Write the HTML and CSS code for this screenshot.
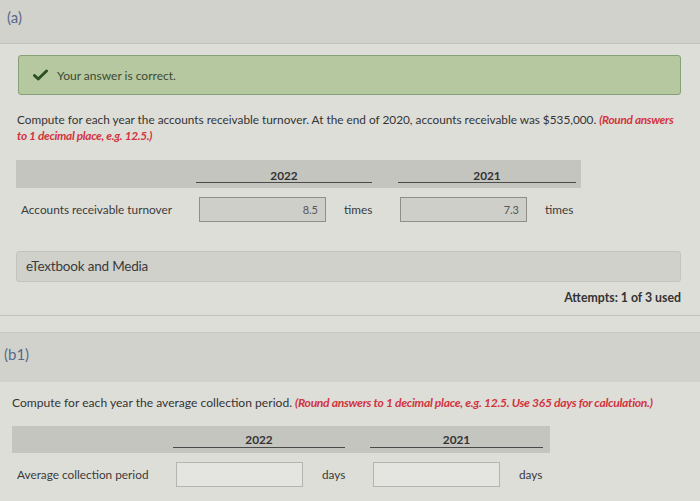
FILE: index.html
```html
<!DOCTYPE html>
<html>
<head>
<meta charset="utf-8">
<link rel="stylesheet" href="styles.css">
</head>
<body>
<div class="sec-head sec-a">(a)</div>
<div class="part part-a">
  <div class="correct">
    <svg class="check" width="15" height="12" viewBox="0 0 15 12"><path d="M1.5 6.5 L5.2 10 L13.5 2" fill="none" stroke="#2f4f26" stroke-width="3" stroke-linecap="round" stroke-linejoin="round"/></svg>
    <span>Your answer is correct.</span>
  </div>
  <p class="instr">Compute for each year the accounts receivable turnover. At the end of 2020, accounts receivable was $535,000. <em>(Round answers<br>to 1 decimal place, e.g. 12.5.)</em></p>
  <div class="tbl tbl-a">
    <div class="thead">
      <div class="th-label"></div>
      <div class="th">2022</div>
      <div class="th">2021</div>
    </div>
    <div class="trow">
      <div class="td-label">Accounts receivable turnover</div>
      <div class="td"><div class="inp filled">8.5</div><span class="unit">times</span></div>
      <div class="td"><div class="inp filled">7.3</div><span class="unit">times</span></div>
    </div>
  </div>
  <div class="media">eTextbook and Media</div>
  <div class="attempts">Attempts: 1 of 3 used</div>
</div>
<div class="sep"></div>
<div class="sec-head sec-b">(b1)</div>
<div class="part part-b">
  <p class="instr">Compute for each year the average collection period. <em>(Round answers to 1 decimal place, e.g. 12.5. Use 365 days for calculation.)</em></p>
  <div class="tbl tbl-b">
    <div class="thead">
      <div class="th-label"></div>
      <div class="th">2022</div>
      <div class="th">2021</div>
    </div>
    <div class="trow">
      <div class="td-label">Average collection period</div>
      <div class="td"><div class="inp empty"></div><span class="unit">days</span></div>
      <div class="td"><div class="inp empty"></div><span class="unit">days</span></div>
    </div>
  </div>
</div>
</body>
</html>
```
FILE: styles.css
```css
html, body {
  margin: 0;
  padding: 0;
}
body {
  width: 700px;
  height: 501px;
  overflow: hidden;
  background: #dedeD9;
  font-family: Lato, "Open Sans", sans-serif;
  color: #3a3a3a;
}
.sec-head {
  background: #d2d2cd;
  color: #56698a;
  font-size: 15px;
  box-sizing: border-box;
}
.sec-a {
  height: 44px;
  padding: 8px 0 0 7px;
  border-bottom: 1px solid #c3c3be;
}
.part-a {
  padding: 11px 19px 0 17px;
}
.correct {
  height: 40px;
  box-sizing: border-box;
  margin-left: 1px;
  background: #b6c8a0;
  border: 1px solid #86a077;
  border-radius: 3px;
  display: flex;
  align-items: center;
  padding-left: 14px;
  font-size: 12px;
  color: #3c4a34;
}
.check {
  margin-right: 9px;
}
.instr {
  margin: 17px 0 0 0;
  font-size: 11.8px;
  line-height: 15.5px;
  color: #333;
}
.instr em {
  color: #d2343e;
  font-weight: bold;
  font-style: italic;
  letter-spacing: -0.3px;
}
.tbl-a {
  margin-top: 17px;
}
.thead {
  display: flex;
  background: #c5c5c0;
}
.tbl-a .thead {
  width: 565px;
  height: 28px;
  margin-left: -1px;
}
.th {
  box-sizing: border-box;
  text-align: center;
  font-size: 11.8px;
  font-weight: bold;
  color: #333;
  border-bottom: 1px solid #4a4a4a;
  padding-top: 8px;
}
.tbl-a .th-label { width: 180px; }
.tbl-a .th { width: 176px; height: 23px; }
.tbl-a .th + .th { margin-left: 26px; width: 178px; }
.trow {
  display: flex;
  align-items: center;
}
.tbl-a .trow {
  height: 26px;
  margin-top: 8px;
}
.td-label {
  font-size: 11.8px;
  color: #3a3a3a;
}
.tbl-a .td-label { width: 183px; padding-left: 5px; box-sizing: border-box; margin-left: -1px; }
.td {
  display: flex;
  align-items: center;
}
.tbl-a .td { width: 201px; }
.tbl-a .td + .td { width: 200px; }
.inp {
  box-sizing: border-box;
  height: 25px;
  font-size: 11px;
  text-align: right;
  line-height: 23px;
  padding-right: 7px;
  border: 1px solid #8e8e8a;
}
.tbl-a .inp { width: 127px; }
.inp.filled {
  background: #cfcfca;
  color: #555;
}
.inp.empty {
  background: #e4e4e0;
  border-color: #b4b4b0;
}
.unit {
  font-size: 11.8px;
  margin-left: 18px;
}
.media {
  margin-top: 29px;
  margin-left: -1px;
  height: 31px;
  box-sizing: border-box;
  background: #d1d1cc;
  border: 1px solid #c4c4bf;
  border-radius: 3px;
  padding: 6px 0 0 9px;
  font-size: 13.5px;
  color: #3a3a3a;
  letter-spacing: -0.2px;
}
.attempts {
  text-align: right;
  font-size: 12.3px;
  font-weight: bold;
  color: #333;
  margin-top: 8px;
}
.sep {
  margin-top: 10px;
  border-top: 1px solid #c3c3be;
  height: 16px;
}
.sec-b {
  height: 50px;
  padding: 12px 0 0 4px;
  border-top: 1px solid #c9c9c4;
}
.part-b {
  padding: 0 19px 0 12px;
}
.part-b .instr {
  margin-top: 13px;
  font-size: 12.1px;
}
.tbl-b {
  margin-top: 15px;
}
.tbl-b .thead {
  width: 538px;
  height: 27px;
}
.tbl-b .th-label { width: 161px; }
.tbl-b .th { width: 172px; height: 22px; padding-top: 6px; }
.tbl-b .th + .th { margin-left: 25px; width: 173px; }
.tbl-b .trow {
  height: 26px;
  margin-top: 9px;
}
.tbl-b .td-label { width: 164px; padding-left: 5px; box-sizing: border-box; }
.tbl-b .td { width: 197px; }
.tbl-b .inp { width: 127px; }
.tbl-b .unit { margin-left: 19px; }
```
